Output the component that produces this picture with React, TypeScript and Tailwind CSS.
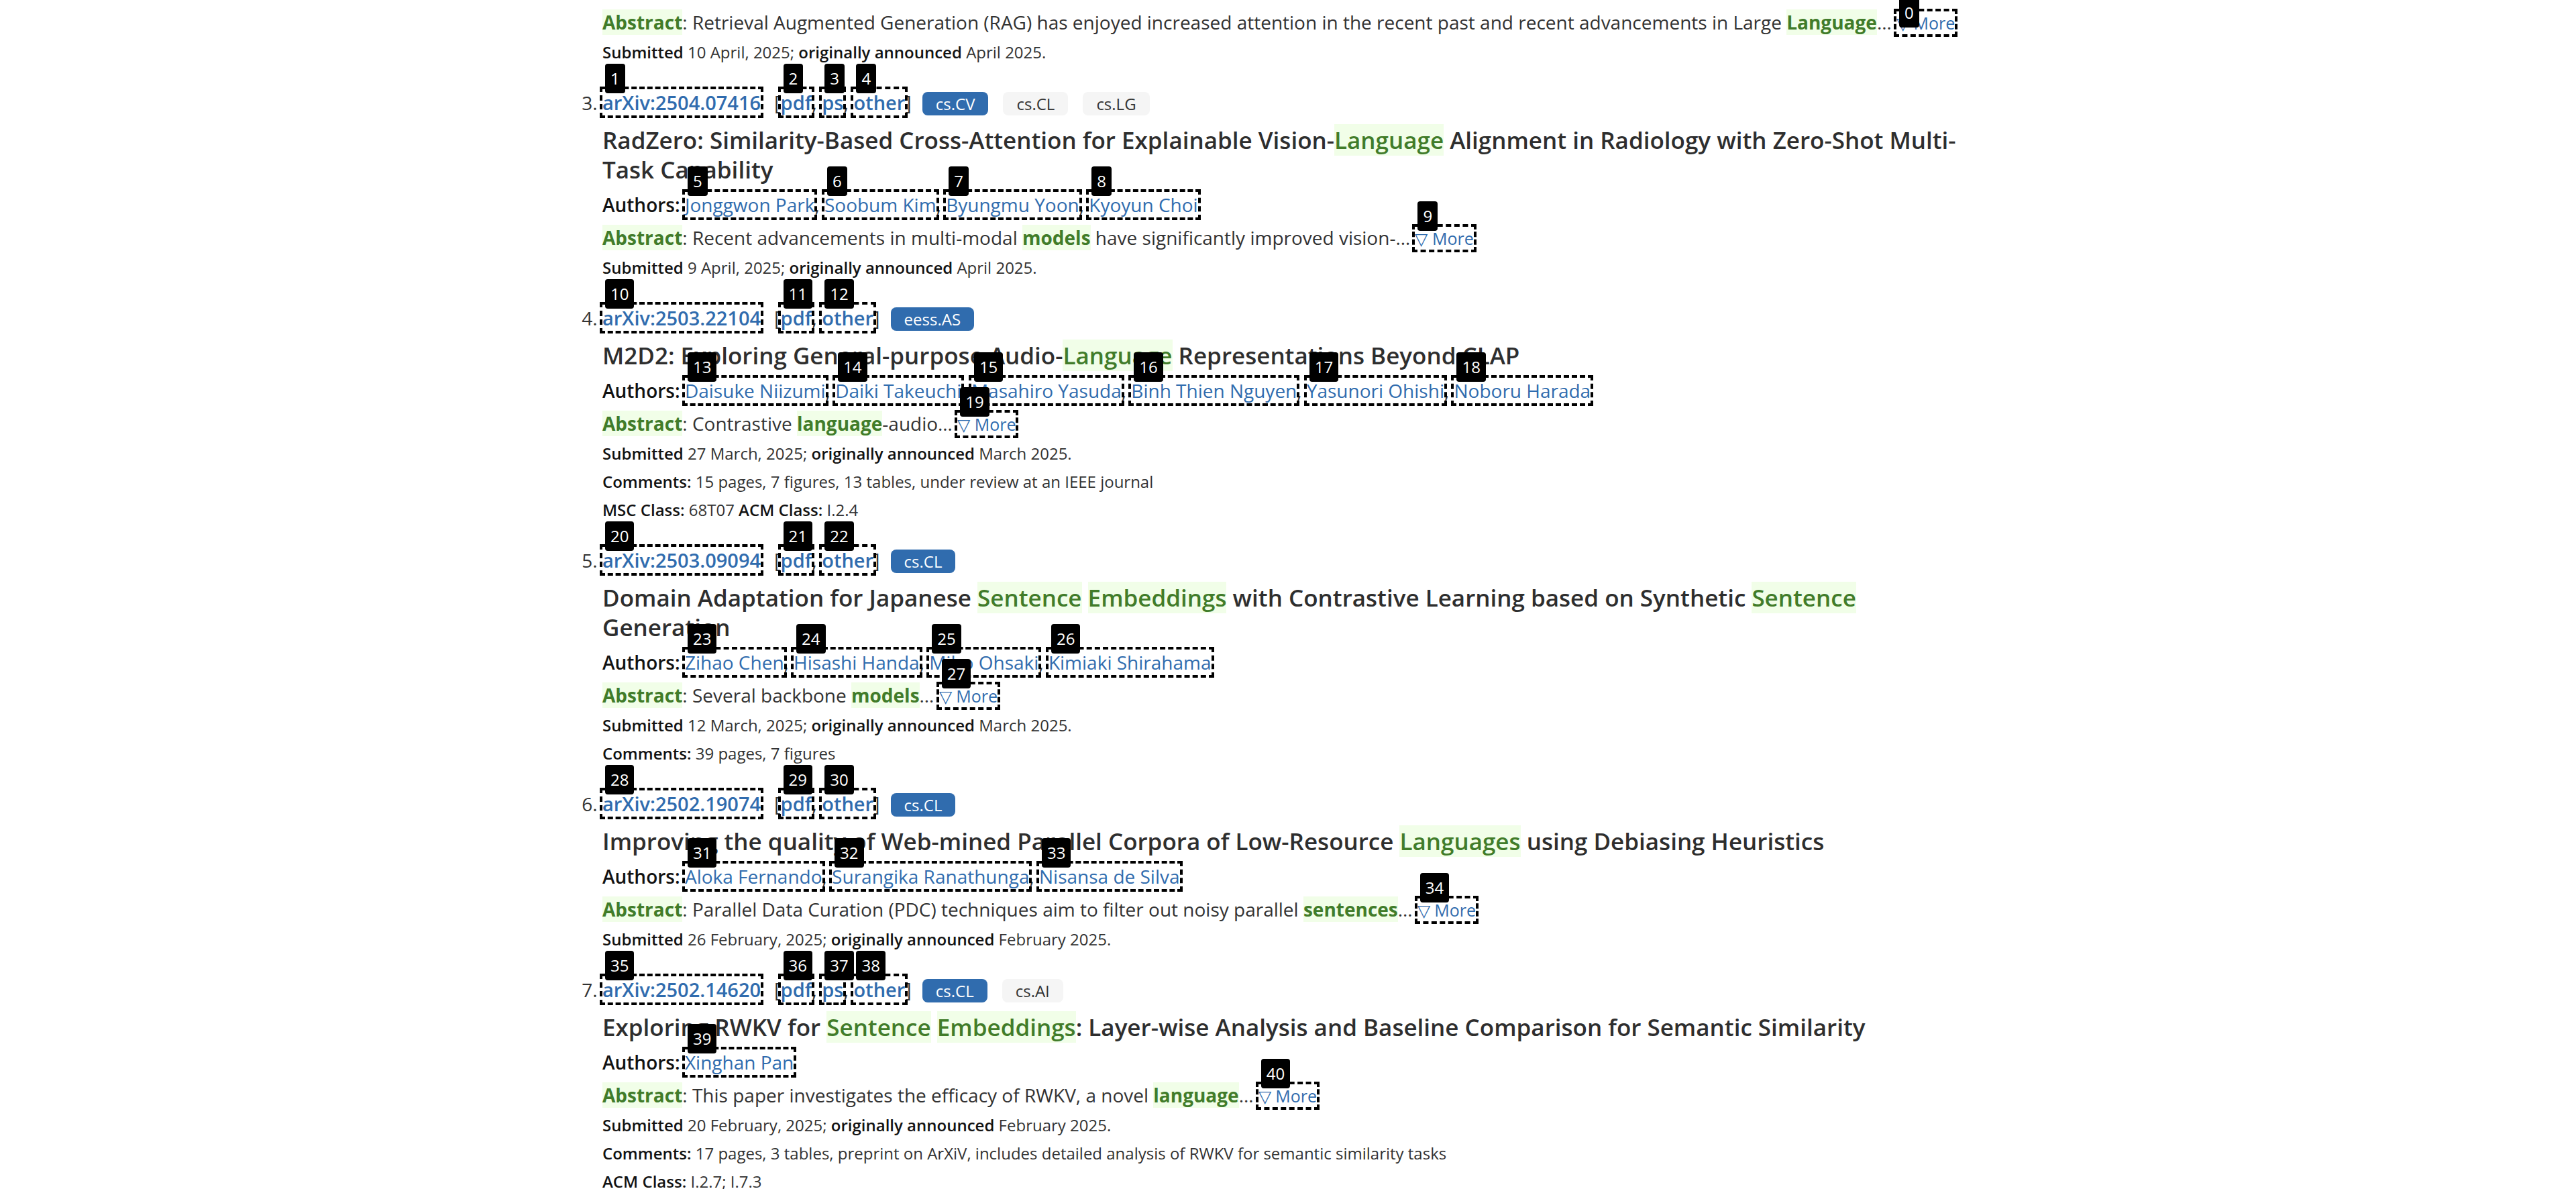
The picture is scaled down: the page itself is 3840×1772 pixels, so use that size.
import type { ReactNode } from "react";

type Tag = { name: string; primary?: boolean };
type Meta = [label: string, value: string][];

type Paper = {
  id: string;
  hint: number;
  formats: string[];
  tags: Tag[];
  title: ReactNode;
  authors: string[];
  abstract: ReactNode;
  submitted: string;
  announced: string;
  meta?: Meta[];
};

function Hit({ children, bold = false }: { children: ReactNode; bold?: boolean }) {
  return (
    <mark className={bold ? "bg-[#f1fee8] font-bold text-[#417c2a]" : "bg-[#f1fee8] text-[#417c2a]"}>
      {children}
    </mark>
  );
}

function HintLink({
  hint,
  className = "",
  pinned = false,
  children,
}: {
  hint: number;
  className?: string;
  pinned?: boolean;
  children: ReactNode;
}) {
  return (
    <a
      href="#"
      className={`relative whitespace-nowrap text-[#306cae] outline-4 outline-dashed outline-black ${className}`}
    >
      {children}
      <span
        className={`absolute left-1 z-10 rounded bg-black px-2 text-[24px] leading-[44px] font-normal text-white ${
          pinned ? "-top-5" : "-top-[38px]"
        }`}
      >
        {hint}
      </span>
    </a>
  );
}

function Label({ children }: { children: ReactNode }) {
  return <span className="font-semibold text-[#121212]">{children}</span>;
}

function Abstract({ hint, pinned, children }: { hint: number; pinned?: boolean; children: ReactNode }) {
  return (
    <p className="mt-[7px]">
      <Hit bold>Abstract</Hit>: {children}…{" "}
      <HintLink hint={hint} pinned={pinned} className="text-[25px]">
        ▽ More
      </HintLink>
    </p>
  );
}

function Submitted({ on, announced }: { on: string; announced: string }) {
  return (
    <p className="mt-0.5 text-[24px]">
      <Label>Submitted</Label> {on}; <Label>originally announced</Label> {announced}.
    </p>
  );
}

function Result({ paper }: { paper: Paper }) {
  const firstAuthor = paper.hint + 1 + paper.formats.length;
  return (
    <li className="mb-[33px]">
      <div>
        <HintLink hint={paper.hint} className="text-[29px] font-semibold">
          arXiv:{paper.id}
        </HintLink>
        <span className="ml-5 text-[29px]">
          [
          {paper.formats.map((f, i) => (
            <span key={f}>
              {i > 0 && ", "}
              <HintLink hint={paper.hint + 1 + i} className="font-semibold">
                {f}
              </HintLink>
            </span>
          ))}
          ]
        </span>
        <span className="ml-4 inline-flex gap-[22px]">
          {paper.tags.map((t) => (
            <span
              key={t.name}
              className={`rounded-lg px-5 text-[24px] leading-[35px] ${
                t.primary ? "bg-[#306cae] text-white" : "bg-[#f5f5f5] text-[#333333]"
              }`}
            >
              {t.name}
            </span>
          ))}
        </span>
      </div>
      <h2 className="mt-[13px] text-[35px] leading-[44px] font-semibold text-[#2e2e2e]">{paper.title}</h2>
      <p className="mt-[9px]">
        <Label>Authors:</Label>{" "}
        {paper.authors.map((a, i) => (
          <span key={a}>
            {i > 0 && ", "}
            <HintLink hint={firstAuthor + i}>{a}</HintLink>
          </span>
        ))}
      </p>
      <Abstract hint={firstAuthor + paper.authors.length}>{paper.abstract}</Abstract>
      <Submitted on={paper.submitted} announced={paper.announced} />
      {paper.meta?.map((line) => (
        <p key={line[0][0]} className="text-[24px]">
          {line.map(([label, value]) => (
            <span key={label}>
              <Label>{label}:</Label> {value}{" "}
            </span>
          ))}
        </p>
      ))}
    </li>
  );
}

const papers: Paper[] = [
  {
    id: "2504.07416",
    hint: 1,
    formats: ["pdf", "ps", "other"],
    tags: [{ name: "cs.CV", primary: true }, { name: "cs.CL" }, { name: "cs.LG" }],
    title: (
      <>
        RadZero: Similarity-Based Cross-Attention for Explainable Vision-<Hit>Language</Hit> Alignment in Radiology
        with Zero-Shot Multi-Task Capability
      </>
    ),
    authors: ["Jonggwon Park", "Soobum Kim", "Byungmu Yoon", "Kyoyun Choi"],
    abstract: (
      <>
        Recent advancements in multi-modal <Hit bold>models</Hit> have significantly improved vision-
      </>
    ),
    submitted: "9 April, 2025",
    announced: "April 2025",
  },
  {
    id: "2503.22104",
    hint: 10,
    formats: ["pdf", "other"],
    tags: [{ name: "eess.AS", primary: true }],
    title: (
      <>
        M2D2: Exploring General-purpose Audio-<Hit>Language</Hit> Representations Beyond CLAP
      </>
    ),
    authors: [
      "Daisuke Niizumi",
      "Daiki Takeuchi",
      "Masahiro Yasuda",
      "Binh Thien Nguyen",
      "Yasunori Ohishi",
      "Noboru Harada",
    ],
    abstract: (
      <>
        Contrastive <Hit bold>language</Hit>-audio
      </>
    ),
    submitted: "27 March, 2025",
    announced: "March 2025",
    meta: [
      [["Comments", "15 pages, 7 figures, 13 tables, under review at an IEEE journal"]],
      [
        ["MSC Class", "68T07"],
        ["ACM Class", "I.2.4"],
      ],
    ],
  },
  {
    id: "2503.09094",
    hint: 20,
    formats: ["pdf", "other"],
    tags: [{ name: "cs.CL", primary: true }],
    title: (
      <>
        Domain Adaptation for Japanese <Hit>Sentence</Hit> <Hit>Embeddings</Hit> with Contrastive Learning based on
        Synthetic <Hit>Sentence</Hit> Generation
      </>
    ),
    authors: ["Zihao Chen", "Hisashi Handa", "Miho Ohsaki", "Kimiaki Shirahama"],
    abstract: (
      <>
        Several backbone <Hit bold>models</Hit>
      </>
    ),
    submitted: "12 March, 2025",
    announced: "March 2025",
    meta: [[["Comments", "39 pages, 7 figures"]]],
  },
  {
    id: "2502.19074",
    hint: 28,
    formats: ["pdf", "other"],
    tags: [{ name: "cs.CL", primary: true }],
    title: (
      <>
        Improving the quality of Web-mined Parallel Corpora of Low-Resource <Hit>Languages</Hit> using Debiasing
        Heuristics
      </>
    ),
    authors: ["Aloka Fernando", "Surangika Ranathunga", "Nisansa de Silva"],
    abstract: (
      <>
        Parallel Data Curation (PDC) techniques aim to filter out noisy parallel <Hit bold>sentences</Hit>
      </>
    ),
    submitted: "26 February, 2025",
    announced: "February 2025",
  },
  {
    id: "2502.14620",
    hint: 35,
    formats: ["pdf", "ps", "other"],
    tags: [{ name: "cs.CL", primary: true }, { name: "cs.AI" }],
    title: (
      <>
        Exploring RWKV for <Hit>Sentence</Hit> <Hit>Embeddings</Hit>: Layer-wise Analysis and Baseline Comparison for
        Semantic Similarity
      </>
    ),
    authors: ["Xinghan Pan"],
    abstract: (
      <>
        This paper investigates the efficacy of RWKV, a novel <Hit bold>language</Hit>
      </>
    ),
    submitted: "20 February, 2025",
    announced: "February 2025",
    meta: [
      [["Comments", "17 pages, 3 tables, preprint on ArXiV, includes detailed analysis of RWKV for semantic similarity tasks"]],
      [["ACM Class", "I.2.7; I.7.3"]],
    ],
  },
];

export default function App() {
  return (
    <main className="h-screen overflow-hidden bg-white font-['Open_Sans',sans-serif] text-[28px] leading-[42px] text-[#333333]">
      {/* The list is scrolled part-way through its second result. */}
      <ol start={2} className="mx-auto -mt-[37px] max-w-[2044px] list-outside list-decimal">
        <li className="mb-[33px]">
          <p>
            <Label>Authors:</Label>{" "}
            <a href="#" className="text-[#306cae]">
              J
            </a>
          </p>
          <Abstract hint={0} pinned>
            Retrieval Augmented Generation (RAG) has enjoyed increased attention in the recent past and recent
            advancements in Large <Hit bold>Language</Hit>
          </Abstract>
          <Submitted on="10 April, 2025" announced="April 2025" />
        </li>
        {papers.map((p) => (
          <Result key={p.id} paper={p} />
        ))}
      </ol>
    </main>
  );
}
